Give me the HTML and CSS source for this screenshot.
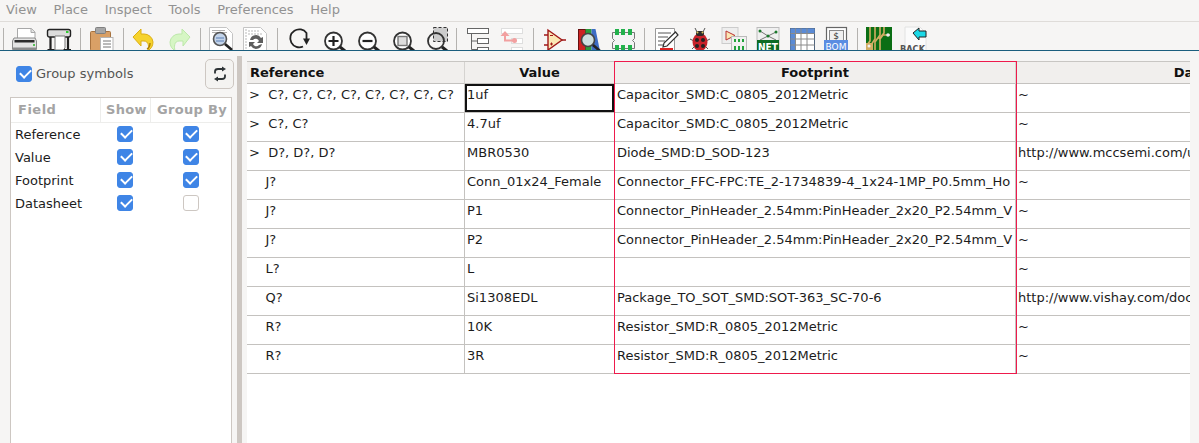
FILE: index.html
```html
<!DOCTYPE html>
<html lang="en">
<head>
    <meta charset="UTF-8">
    <title>Symbol Fields</title>
    <link rel="stylesheet" href="styles.css">
</head>
<body>
    <!-- Menu bar -->
    <div class="menubar">
        <span>View</span><span>Place</span><span>Inspect</span><span>Tools</span><span>Preferences</span><span>Help</span>
    </div>

    <!-- Toolbar -->
    <div class="toolbar">
        <i class="sep"></i>
        <svg class="tool" viewBox="0 0 24 24"><path d="M5.500 1.500h14l3.500 3.500v7h-17.500z" fill="#fff" stroke="#a8a8a8"/><path d="M19 1.500v4h4" fill="#e2e2e2" stroke="#a8a8a8"/><path d="M2 11h21l1.500 3v8.500H.5V14z" fill="#e4e4e4" stroke="#8a8a8a"/><rect x="2.500" y="13" width="20" height="2.500" fill="#2c2c2c"/><rect x="1" y="20.500" width="23" height="2.500" fill="#8c8c8c"/><rect x="21" y="17" width="2" height="2" fill="#55c055"/></svg>
        <svg class="tool" viewBox="0 0 24 24"><rect x="1.500" y="2.500" width="23" height="7.500" rx="2" fill="#dcdcdc" stroke="#222" stroke-width="1.400"/><rect x="20" y="4" width="2.500" height="2" fill="#3c3"/><path d="M4.500 10v13M22 10v13" stroke="#222" stroke-width="2.200"/><path d="M9 9h10v12l-2 2H9z" fill="#fff" stroke="#777"/><path d="M1.500 23h7M18 23h7" stroke="#222" stroke-width="2.200"/></svg>
        <i class="sep"></i>
        <svg class="tool" viewBox="0 0 24 24"><rect x="1.500" y="4.500" width="20" height="19" rx="1" fill="#d9a066" stroke="#a8733f"/><rect x="6.500" y=".5" width="10" height="6" rx="1" fill="#a6a6a6" stroke="#808080"/><rect x="11.500" y="10.500" width="12.500" height="14" fill="#fff" stroke="#b5b5b5"/><path d="M14 14h8M14 17h8M14 20h8" stroke="#777"/></svg>
        <i class="sep"></i>
        <svg class="tool" viewBox="0 0 24 24"><path d="M1 10l8-8v5h3a9 9 0 0 1 9 8c0 4-2 7-5 8.500 1-3 1-9.500-4-9.500H9v5z" fill="#f6d32d" stroke="#dcae14" stroke-linejoin="round"/><path d="M15 22c2-1 3-4 3-6" stroke="#a87b08" stroke-width="1.400" fill="none"/></svg>
        <svg class="tool" viewBox="0 0 24 24"><path d="M24 10l-8-8v5h-3a9 9 0 0 0-9 8c0 4 2 7 5 8.500-1-3-1-9.500 4-9.500h4v5z" fill="#d6f6c4" stroke="#bde8aa" stroke-linejoin="round"/></svg>
        <i class="sep"></i>
        <svg class="tool" viewBox="0 0 24 24"><path d="M.5.500h17l6 6v17H.5z" fill="#fff" stroke="#c4c4c4"/><path d="M3 3.500h13M3 5.500h15" stroke="#b0b0b0"/><circle cx="11" cy="12" r="6.500" fill="#c3d4ea" stroke="#555" stroke-width="1.600"/><path d="M7 11h8M7 14h8" stroke="#5a7fb5"/><path d="M16 17l7 6" stroke="#222" stroke-width="2.600"/></svg>
        <svg class="tool" viewBox="0 0 24 24"><path d="M.5.500h17l6 6v17H.5z" fill="#fff" stroke="#c4c4c4"/><path d="M3 2v21M5 4h11M5 7h15" stroke="#b9b9b9" stroke-dasharray="2 1"/><path d="M7 13a6 6 0 0 1 11-2l2-1v6h-6l2-2a3.500 3.500 0 0 0-6-1z" fill="#5e5e5e"/><path d="M19 17a6 6 0 0 1-11 2l-2 1v-5h6l-2 2a3.500 3.500 0 0 0 6 1z" fill="#5e5e5e"/></svg>
        <i class="sep"></i>
        <svg class="tool" viewBox="0 0 24 24"><path d="M17 19.500A9 9 0 1 1 20.500 6v6" fill="none" stroke="#222" stroke-width="1.800"/><path d="M17 11.500h7l-3.500 6.500z" fill="#222"/></svg>
        <svg class="tool" viewBox="0 0 24 24"><circle cx="13.500" cy="14" r="8.500" fill="#fff" stroke="#333" stroke-width="1.800"/><path d="M8.500 14h10M13.500 9v10" stroke="#222" stroke-width="2.200"/><path d="M20 20l5 4" stroke="#222" stroke-width="3"/></svg>
        <svg class="tool" viewBox="0 0 24 24"><circle cx="13.500" cy="14" r="8.500" fill="#fff" stroke="#333" stroke-width="1.800"/><path d="M8.500 14h10" stroke="#222" stroke-width="2.200"/><path d="M20 20l5 4" stroke="#222" stroke-width="3"/></svg>
        <svg class="tool" viewBox="0 0 24 24"><circle cx="14.500" cy="14" r="8.500" fill="#fff" stroke="#333" stroke-width="1.800"/><rect x="10" y="9.500" width="9" height="9" fill="#ddd" stroke="#777" stroke-width="1.400"/><path d="M21 20l5 4" stroke="#222" stroke-width="3"/></svg>
        <svg class="tool" viewBox="0 0 24 24"><rect x="11.500" y=".5" width="14" height="14" fill="#ccc" stroke="#333" stroke-dasharray="3 2"/><circle cx="14" cy="14" r="8" fill="none" stroke="#333" stroke-width="1.800"/><path d="M20 20l5 4" stroke="#222" stroke-width="3"/></svg>
        <i class="sep"></i>
        <svg class="tool" viewBox="0 0 24 24"><rect x="2.500" y="1.500" width="21" height="5" fill="#fff" stroke="#666"/><rect x="12.500" y="11.500" width="11" height="5" fill="#fff" stroke="#666"/><rect x="12.500" y="20.500" width="11" height="5" fill="#fff" stroke="#666"/><path d="M6.500 6.500v16h6M6.500 14h6" fill="none" stroke="#666"/></svg>
        <svg class="tool" viewBox="0 0 24 24"><rect x="2.500" y="1.500" width="21" height="5" fill="#fff" stroke="#dedede"/><rect x="12.500" y="11.500" width="11" height="5" fill="#fff" stroke="#dedede"/><rect x="12.500" y="20.500" width="11" height="5" fill="#fff" stroke="#dedede"/><path d="M6 6v7.500h9" fill="none" stroke="#f2a0a0" stroke-width="2"/><path d="M1.500 9l4.500-5 4.500 5z" fill="#f2a0a0"/><circle cx="15.500" cy="13.500" r="2.500" fill="#f2a0a0"/></svg>
        <i class="sep"></i>
        <svg class="tool" viewBox="0 0 24 24"><path d="M6 3v20l14-10z" fill="#fbe7b4" stroke="#a01818" stroke-width="1.400"/><path d="M2 8h4M2 18h4M20 13h4" stroke="#a01818" stroke-width="1.400"/><path d="M8 8.500h3M8 17h3M9.500 15.500v3" stroke="#a01818"/></svg>
        <svg class="tool" viewBox="0 0 24 24"><rect x="2.500" y="2.500" width="7" height="21" fill="#c22" stroke="#611"/><rect x="9.500" y="2" width="6" height="22" fill="#2b9a3a"/><path d="M15.500 2h4l4.500 22h-8.500z" fill="#3d6cc4"/><circle cx="12" cy="13" r="6.500" fill="#cfe0e0" stroke="#444" stroke-width="1.600"/><path d="M17 18l7 6" stroke="#222" stroke-width="2.600"/></svg>
        <svg class="tool" viewBox="0 0 24 24"><path d="M2.500 5.500h22v6l-2 2 2 2v6h-22v-6l2-2-2-2z" fill="#f4f4f4" stroke="#777"/><path d="M5 2h4v6H5zM11 2h4v6h-4zM18 2h4v6h-4zM5 18h4v6H5zM11 18h4v6h-4zM18 18h4v6h-4z" fill="#22b14c"/></svg>
        <i class="sep"></i>
        <svg class="tool" viewBox="0 0 24 24"><path d="M2.500 1.500h19v22h-19z" fill="#fff" stroke="#999"/><path d="M5 6h13M5 10h10M5 14h7M5 18h5" stroke="#555"/><path d="M22.500 5l2.500 3-11 11-4 1 1-4z" fill="#fff" stroke="#333" stroke-width="1.200"/><rect x="7" y="21" width="13" height="2" fill="#d22"/></svg>
        <svg class="tool" viewBox="0 0 24 24"><path d="M8 1l2 4M18 1l-2 4M3 12l4 2M23 12l-4 2M5 22l3-3M21 22l-3-3" stroke="#555" fill="none"/><ellipse cx="13" cy="15" rx="7.500" ry="9" fill="#c8222a"/><rect x="9" y="4" width="8" height="5" rx="2" fill="#2b2b2b"/><circle cx="10.500" cy="5.500" r="1" fill="#d9c25a"/><circle cx="15.500" cy="5.500" r="1" fill="#d9c25a"/><circle cx="10" cy="13" r="2" fill="#222"/><circle cx="16" cy="13" r="2" fill="#222"/><circle cx="10" cy="19" r="2" fill="#222"/><circle cx="16" cy="19" r="2" fill="#222"/></svg>
        <svg class="tool" viewBox="0 0 24 24"><rect x="1" y=".5" width="16" height="16" fill="#eee" stroke="#ccc"/><path d="M5 4v9l9-4.500z" fill="#fbe7b4" stroke="#b33"/><rect x="10.500" y="9.500" width="15" height="14" fill="#f1f1f1" stroke="#bbb"/><path d="M13 12h2v3h-2zM17 12h2v3h-2zM21 12h2v3h-2zM13 19h2v4h-2zM17 19h2v4h-2zM21 19h2v4h-2z" fill="#22a33c"/></svg>
        <svg class="tool" viewBox="0 0 24 24"><rect x="2" y=".5" width="22" height="23" fill="#f0f0f0" stroke="#bbb"/><path d="M5 4l8 5 8-4M5 13l8-4 8 4" stroke="#777" fill="none"/><g fill="#1b7a2c"><circle cx="5" cy="4" r="1.500"/><circle cx="21" cy="5" r="1.500"/><circle cx="13" cy="9" r="1.500"/></g><rect x="2" y="13" width="22" height="11" fill="#0b6b24"/><text x="13" y="24" textLength="20" lengthAdjust="spacingAndGlyphs" class="icon-text icon-net">NET</text></svg>
        <svg class="tool" viewBox="0 0 24 24"><rect x="1.500" y="1.500" width="24" height="23" fill="#fff" stroke="#52667e"/><path d="M1.500 1.500h5v23h-5zM1.500 1.500h24v5h-24z" fill="#5b8bd6"/><path d="M6.500 6.500h19M6.500 12h19M6.500 18h19M12 1.500v23M18 1.500v23M1.500 6.500h5M1.500 12h5M1.500 18h5M6.500 1.500v23" stroke="#8a8a8a"/></svg>
        <svg class="tool" viewBox="0 0 24 24"><rect x="3.500" y=".5" width="20" height="15" fill="#fff" stroke="#666" stroke-width="1.200"/><rect x="6.500" y="3.500" width="14" height="10" fill="#f0f0f0" stroke="#888"/><text x="13" y="12" class="icon-text icon-dollar">$</text><rect x="1" y="13" width="24" height="11" fill="#5b8de2"/><text x="13" y="22.500" class="icon-text icon-bom">BOM</text></svg>
        <i class="sep"></i>
        <svg class="tool tool-wide" viewBox="0 0 26 24"><rect width="26" height="24" fill="#0b6e14"/><path d="M4 0v14l-3 4M9 0v12l-4 6v6M14 0v8l-5 7v9M18 0v6l-5 6M24 8h-7l-3 4v12" fill="none" stroke="#d2ad63" stroke-width="1.600"/><rect y="16" width="7" height="8" fill="#d2ad63"/><circle cx="3" cy="19" r="1.500" fill="#eee"/><circle cx="22" cy="8" r="1.800" fill="#eee"/></svg>
        <svg class="tool tool-wide" viewBox="0 0 26 24"><path d="M5 0h15l6 6v18H5z" fill="#fbfbfb" stroke="#e2e2e2"/><path d="M13 6l6-5v3h7v6h-7v3z" fill="#1cd8e6" stroke="#222"/><text x="0" y="25" textLength="25" lengthAdjust="spacingAndGlyphs" class="icon-back">BACK</text></svg>
    </div>

    <div class="main">
        <!-- Left panel -->
        <div class="sidebar">
            <div class="group-row">
                <label class="group-label"><input type="checkbox" class="check" checked> <span>Group symbols</span></label>
                <button class="refresh">
                    <svg viewBox="0 0 16 16" width="16" height="16"><path d="M3 7.500V5.500C3 3.500 4.500 3 6 3h5" fill="none" stroke="#2e3436" stroke-width="1.800"/><path d="M10 .5v5L14 3z" fill="#2e3436"/><path d="M13 8.500v2c0 2-1.500 2.500-3 2.500H5" fill="none" stroke="#2e3436" stroke-width="1.800"/><path d="M6 10.500v5L2 13z" fill="#2e3436"/></svg>
                </button>
            </div>
            <div class="fields">
                <div class="fields-head">
                    <div class="fh fh-field">Field</div>
                    <div class="fh">Show</div>
                    <div class="fh">Group By</div>
                </div>
                <div class="field-row"><span>Reference</span><input type="checkbox" class="check" checked><input type="checkbox" class="check" checked></div>
                <div class="field-row"><span>Value</span><input type="checkbox" class="check" checked><input type="checkbox" class="check" checked></div>
                <div class="field-row"><span>Footprint</span><input type="checkbox" class="check" checked><input type="checkbox" class="check" checked></div>
                <div class="field-row"><span>Datasheet</span><input type="checkbox" class="check" checked><input type="checkbox" class="check"></div>
            </div>
        </div>

        <div class="splitter"></div>

        <!-- Symbol grid -->
        <div class="grid-wrap">
            <div class="grid">
                <div class="hcell hcell-left">Reference</div><div class="hcell">Value</div><div class="hcell">Footprint</div><div class="hcell">Datasheet</div>

                <div class="cell">&gt;  C?, C?, C?, C?, C?, C?, C?, C?</div><div class="cell cell-selected">1uf</div><div class="cell">Capacitor_SMD:C_0805_2012Metric</div><div class="cell">~</div>
                <div class="cell">&gt;  C?, C?</div><div class="cell">4.7uf</div><div class="cell">Capacitor_SMD:C_0805_2012Metric</div><div class="cell">~</div>
                <div class="cell">&gt;  D?, D?, D?</div><div class="cell">MBR0530</div><div class="cell">Diode_SMD:D_SOD-123</div><div class="cell">http://www.mccsemi.com/up_pdf/MBR0520~MBR0580(SOD123).pdf</div>
                <div class="cell">    J?</div><div class="cell">Conn_01x24_Female</div><div class="cell">Connector_FFC-FPC:TE_2-1734839-4_1x24-1MP_P0.5mm_Ho</div><div class="cell">~</div>
                <div class="cell">    J?</div><div class="cell">P1</div><div class="cell">Connector_PinHeader_2.54mm:PinHeader_2x20_P2.54mm_V</div><div class="cell">~</div>
                <div class="cell">    J?</div><div class="cell">P2</div><div class="cell">Connector_PinHeader_2.54mm:PinHeader_2x20_P2.54mm_V</div><div class="cell">~</div>
                <div class="cell">    L?</div><div class="cell">L</div><div class="cell"></div><div class="cell">~</div>
                <div class="cell">    Q?</div><div class="cell">Si1308EDL</div><div class="cell">Package_TO_SOT_SMD:SOT-363_SC-70-6</div><div class="cell">http://www.vishay.com/docs/63399/si1308edl.pdf</div>
                <div class="cell">    R?</div><div class="cell">10K</div><div class="cell">Resistor_SMD:R_0805_2012Metric</div><div class="cell">~</div>
                <div class="cell">    R?</div><div class="cell">3R</div><div class="cell">Resistor_SMD:R_0805_2012Metric</div><div class="cell">~</div>
            </div>
            <!-- highlight round the footprint column -->
            <div class="highlight"></div>
        </div>
    </div>
</body>
</html>
```

FILE: styles.css
```css
* {
    box-sizing: border-box;
}

body {
    margin: 0;
    height: 443px;
    overflow: hidden;
    background-color: #f6f5f4;
    font-family: "DejaVu Sans", sans-serif;
    font-size: 13px;
    color: #1c1c1c;
    display: flex;
    flex-direction: column;
}

.menubar {
    height: 22px;
    flex: none;
    display: flex;
    gap: 16.6px;
    padding-left: 6px;
    line-height: 19px;
    color: #929292;
    border-bottom: 1px solid #dfdcd9;
}

.toolbar {
    height: 29px;
    flex: none;
    display: flex;
    gap: 10px;
    padding: 5px 0 0 3px;
    overflow: hidden;
    border-bottom: 1px solid #1b5e7e;
}

.tool {
    flex: none;
    width: 24px;
    height: 24px;
    overflow: visible;
}

.tool-wide {
    width: 26px;
    margin-right: -2px;
}

.sep {
    flex: none;
    width: 1px;
    margin: 1px -2px 0 0;
    background-color: #b4b2af;
}

.icon-text {
    font-family: "DejaVu Sans", sans-serif;
    text-anchor: middle;
}

.icon-net {
    font-size: 10px;
    font-weight: bold;
    fill: #fff;
}

.icon-dollar {
    font-size: 9px;
    fill: #333;
}

.icon-bom {
    font-size: 9px;
    fill: #fff;
}

.icon-back {
    font-family: "DejaVu Sans", sans-serif;
    font-size: 9.5px;
    font-weight: bold;
    fill: #555;
}

.main {
    flex: 1;
    min-height: 0;
    display: flex;
    margin-top: 5px;
}

.sidebar {
    width: 237px;
    flex: none;
    display: flex;
    flex-direction: column;
    padding: 3px 5px 0 10px;
}

.group-row {
    height: 30px;
    display: flex;
    align-items: center;
    justify-content: space-between;
    margin-bottom: 8px;
    padding-left: 6px;
}

.group-label {
    display: flex;
    align-items: center;
    gap: 4px;
    color: #555;
}

.group-label span {
    margin-bottom: 2px;
}

.refresh {
    width: 29px;
    height: 30px;
    padding: 0;
    display: flex;
    align-items: center;
    justify-content: center;
    margin-right: -2px;
    background-color: #f4f3f1;
    border: 1px solid #cdc7c2;
    border-radius: 5px;
}

.check {
    appearance: none;
    flex: none;
    width: 16px;
    height: 16px;
    margin: 0;
    position: relative;
    background-color: #fff;
    border: 1px solid #cdc7c2;
    border-radius: 3px;
}

.check:checked {
    background-color: #3f85e6;
    border-color: #3f85e6;
}

.check:checked::after {
    content: "";
    position: absolute;
    left: 2.5px;
    top: 2px;
    width: 9px;
    height: 5px;
    border-left: 2.5px solid #fff;
    border-bottom: 2.5px solid #fff;
    transform: rotate(-45deg);
}

.fields {
    flex: 1;
    background-color: #fff;
    border: 1px solid #cdc7c2;
    border-bottom: none;
}

.fields-head {
    display: grid;
    grid-template-columns: 89px 50px 1fr;
    height: 25px;
    border-bottom: 1px solid #ededeb;
}

.fh {
    text-align: center;
    padding-left: 2px;
    line-height: 23px;
    font-weight: bold;
    letter-spacing: 0.3px;
    white-space: nowrap;
    color: #a4a4a4;
    border-left: 1px solid #ededeb;
}

.fh-field {
    text-align: left;
    padding-left: 7px;
    letter-spacing: 0.5px;
    border-left: none;
}

.field-row {
    display: grid;
    grid-template-columns: 89px 50px 1fr;
    align-items: center;
    justify-items: center;
    height: 23px;
}

.field-row span {
    justify-self: start;
    padding-left: 4px;
}

.field-row .check {
    margin-bottom: 1px;
}

.splitter {
    width: 5px;
    flex: none;
    background-color: #cdc7c2;
}

.grid-wrap {
    position: relative;
    width: 943px;
    margin-left: 5px;
    margin-top: 5px;
    overflow: hidden;
    background-color: #fff;
}

.grid {
    display: grid;
    grid-template-columns: 218px 150px 401px 392px;
    grid-template-rows: 22px;
    grid-auto-rows: 29px;
    border-top: 1px solid #c8c6c3;
}

.hcell {
    font-weight: bold;
    text-align: center;
    line-height: 21px;
    white-space: nowrap;
    color: #111;
    background-color: #f1efed;
    border-right: 1px solid #d5d3d0;
    border-bottom: 1px solid #c4c2bf;
}

.hcell-left {
    text-align: left;
    padding-left: 3px;
}

.cell {
    padding: 3px 2px 0;
    line-height: 16px;
    white-space: pre;
    overflow: hidden;
    background-color: #fff;
    border-right: 1px solid #c4c2bf;
    border-bottom: 1px solid #c4c2bf;
}

.cell-selected {
    box-shadow: inset 0 0 0 2px #111;
}

.highlight {
    position: absolute;
    left: 367px;
    top: 0;
    width: 403px;
    height: 313px;
    border: 1px solid #ee1a4c;
}
```
